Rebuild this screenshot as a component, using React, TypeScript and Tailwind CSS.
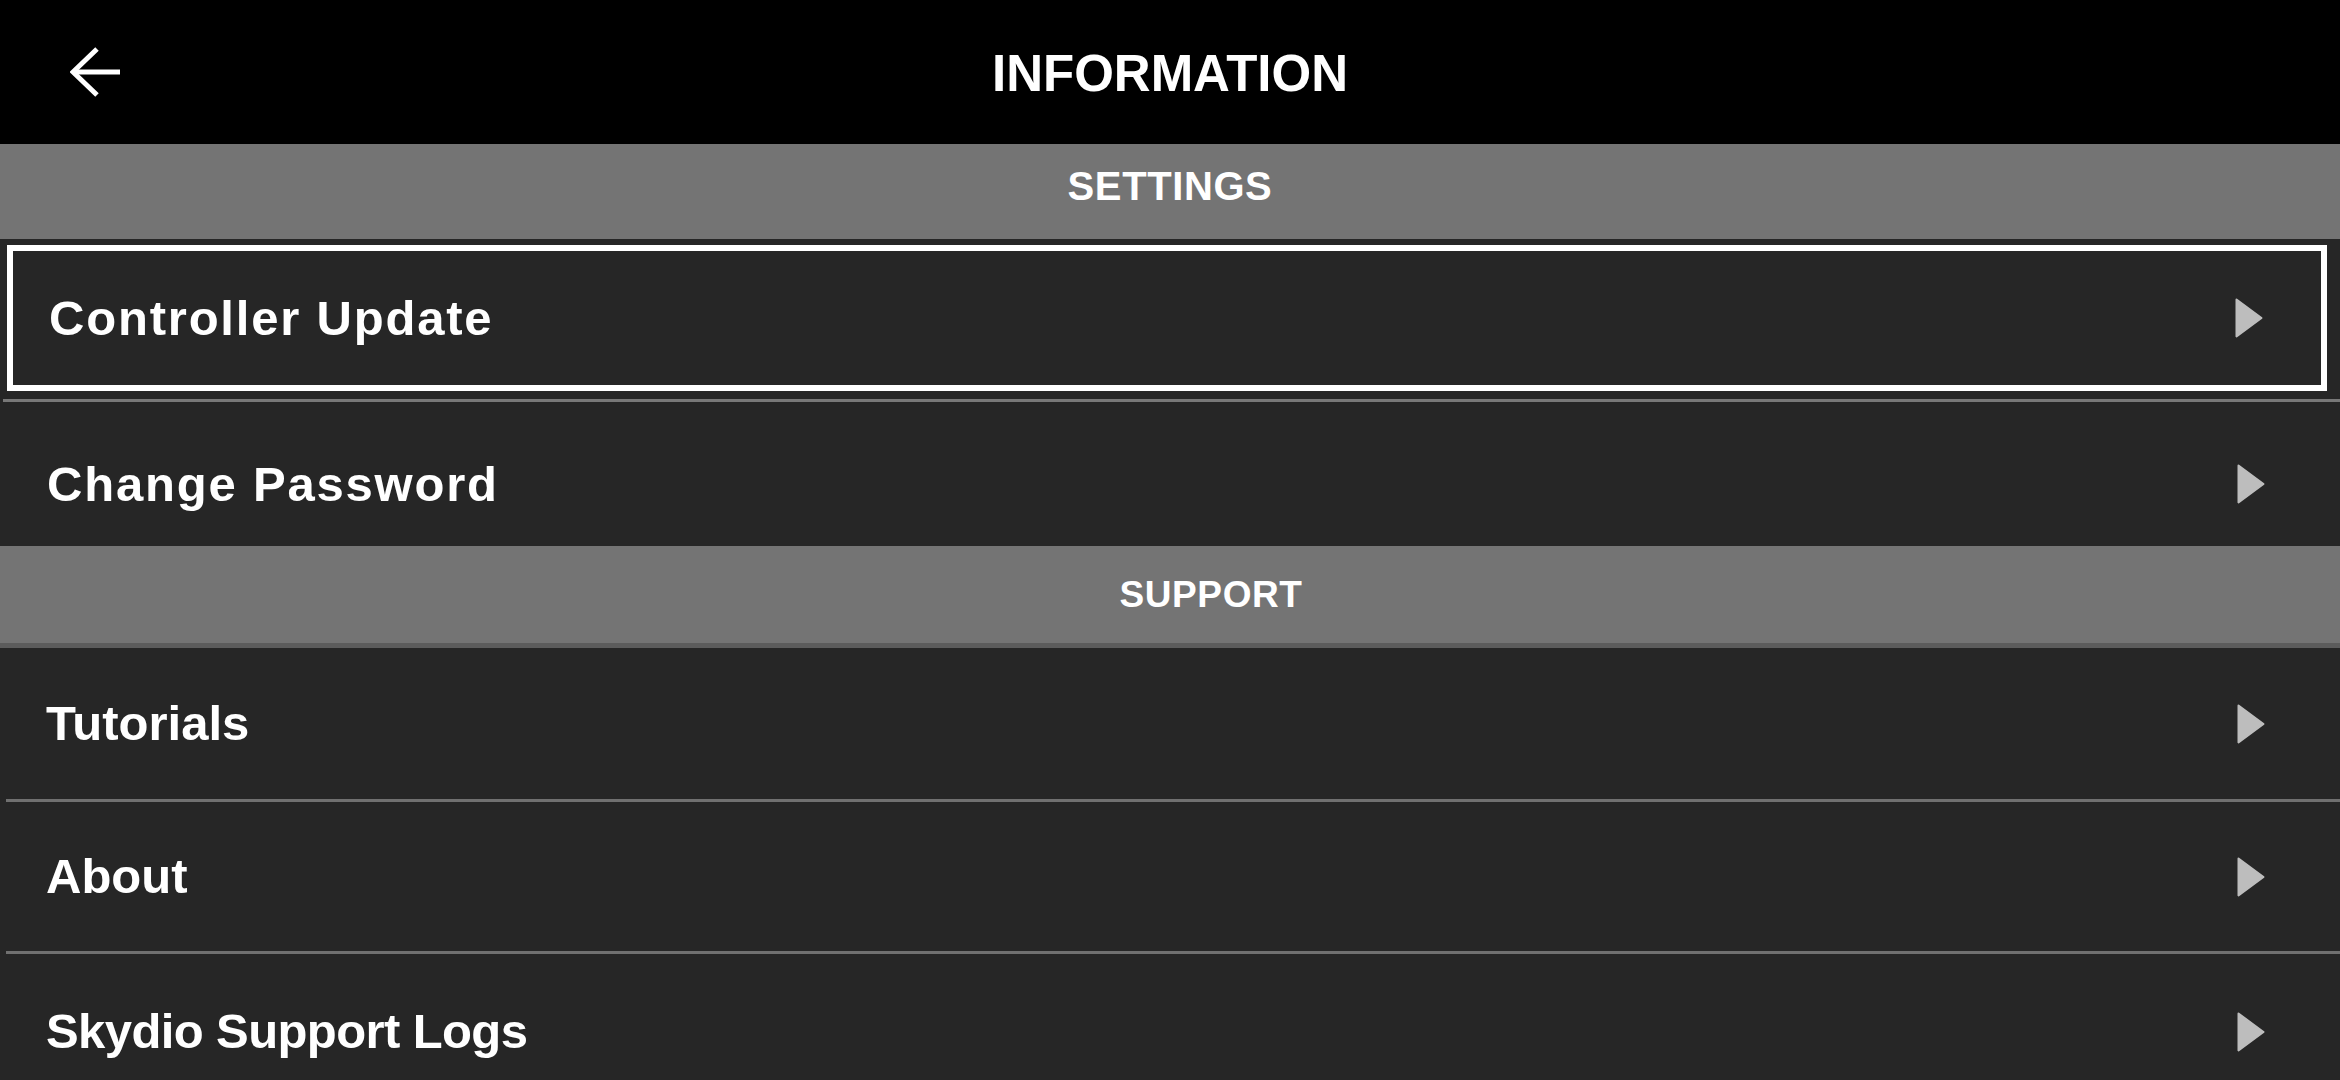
const font = "font-['Liberation_Sans',Arial,sans-serif]"

function BackArrow() {
  return (
    <svg width="52" height="52" viewBox="0 0 52 52" fill="none">
      <path d="M27 3 L3 26 L27 49" stroke="white" strokeWidth="5" strokeLinejoin="miter" />
      <path d="M4 26 H50" stroke="white" strokeWidth="5" />
    </svg>
  )
}

function Chevron() {
  return (
    <svg width="28" height="40" viewBox="0 0 28 40">
      <path
        d="M1.5 1.5 L26.5 20 L1.5 38.5 Z"
        fill="#bdbdbd"
        stroke="#bdbdbd"
        strokeWidth="2"
        strokeLinejoin="round"
      />
    </svg>
  )
}

function Separator() {
  return <div className="ml-[6px] h-[3px] bg-[#707070]" />
}

function Row({ label, h, track }: { label: string; h: string; track: string }) {
  return (
    <div className={'flex items-center justify-between pl-[46px] pr-[75px] ' + h}>
      <span className={'text-[49px] font-bold leading-none text-white ' + track}>{label}</span>
      <Chevron />
    </div>
  )
}

export default function App() {
  return (
    <div className={'h-[1080px] w-[2340px] overflow-hidden bg-[#262626] ' + font}>
      {/* top bar */}
      <div className="grid h-[144px] grid-cols-[1fr_auto_1fr] items-center bg-black">
        <div className="pl-[70px]">
          <BackArrow />
        </div>
        <h1 className="pt-[2px] text-[51px] font-bold leading-none text-white">INFORMATION</h1>
        <div />
      </div>

      {/* settings */}
      <div className="flex h-[95px] items-center justify-center bg-[#747474] pb-[12px] text-[40px] font-bold leading-none tracking-[0.6px] text-white">
        SETTINGS
      </div>
      <div className="h-[160px] pb-[8px] pl-[7px] pr-[13px] pt-[6px]">
        <div className="flex h-full items-center justify-between border-[6px] border-white pl-[36px] pr-[58px]">
          <span className="text-[49px] font-bold leading-none tracking-[1.8px] text-white">
            Controller Update
          </span>
          <Chevron />
        </div>
      </div>
      <div className="ml-[3px] h-[3px] bg-[#787878]" />
      <div className="flex h-[144px] items-center justify-between pl-[47px] pr-[75px] pt-[20px]">
        <span className="text-[49px] font-bold leading-none tracking-[1.8px] text-white">
          Change Password
        </span>
        <Chevron />
      </div>

      {/* support */}
      <div className="flex h-[102px] items-center justify-center border-b-[5px] border-[#5c5c5c] bg-[#747474] pl-[82px] text-[37px] font-bold leading-none tracking-[0.6px] text-white">
        SUPPORT
      </div>
      <Row label="Tutorials" h="h-[151px]" track="tracking-[0px]" />
      <Separator />
      <Row label="About" h="h-[149px]" track="tracking-[0px]" />
      <Separator />
      <Row label="Skydio Support Logs" h="h-[155px]" track="tracking-[-0.6px]" />
    </div>
  )
}
